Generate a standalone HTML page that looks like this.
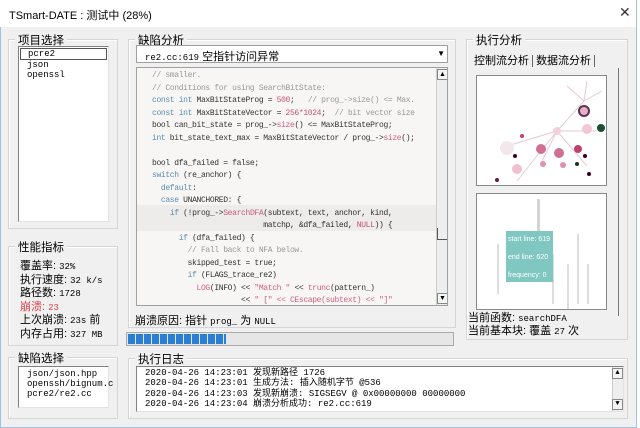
<!DOCTYPE html>
<html><head><meta charset="utf-8"><style>
*{margin:0;padding:0;box-sizing:border-box}
body{width:640px;height:428px;overflow:hidden;background:#fff;font-family:"Liberation Sans","Noto Sans CJK SC",sans-serif;font-size:11px;color:#000;position:relative}
.win{position:absolute;left:0;top:0;width:637px;height:428px;border:1px solid #9cc3e6;border-top:none;background:#f0f0f0}
.title{position:absolute;left:0;top:0;width:636px;height:27px;background:#fff;font-size:11px;padding:7px 0 0 9px}
.x{position:absolute;left:619px;top:4px;font-size:14px;color:#333}
.grp{position:absolute;border:1px solid #d5d5d5;box-shadow:inset 1px 1px 0 #fff}
.gl{position:absolute;top:-8px;left:6px;background:#f0f0f0;padding:0 3px;font-size:11.5px}
.box{position:absolute;background:#fff;border:1px solid #828282;border-right-color:#e3e3e3;border-bottom-color:#e3e3e3}
.mono{font-family:"Liberation Mono","Noto Sans CJK SC",monospace;font-size:9px;line-height:10px}
.code{position:absolute;left:136px;top:67px;width:312px;height:239px;background:#f7f6f5;border:1px solid #a0a0a0;overflow:hidden}
.code pre{font-family:"Liberation Mono",monospace;font-size:8px;letter-spacing:-0.35px;line-height:12.5px;color:#333;position:absolute;left:15px;top:2px;white-space:pre}
.cm{color:#999}.kw{color:#5a8fb0}.nu{color:#c7557a}.fn{color:#d06080}
.sb{position:absolute;background:#eee;border-left:1px solid #ccc}
.arr{position:absolute;width:11px;height:11px;background:#f4f4f4;border:1px solid #888;font-size:7px;text-align:center;line-height:9px}
</style></head><body>
<div class="win"></div>
<div class="title">TSmart-DATE : 测试中 (28%)</div>
<div class="x">✕</div>

<div class="grp" style="left:8px;top:39px;width:110px;height:190px"><div class="gl">项目选择</div></div>
<div class="box mono" style="left:18px;top:46px;width:91px;height:176px;padding:1px 0 0 0">
<div style="border:1px solid #555;margin:0 1px;padding-left:7px">pcre2</div>
<div style="padding-left:8px">json</div><div style="padding-left:8px">openssl</div></div>

<div class="grp" style="left:8px;top:246px;width:110px;height:100px"><div class="gl">性能指标</div></div>
<div style="position:absolute;left:20px;top:260px;line-height:13.5px;font-size:11px">
<div>覆盖率: <span class="mono">32%</span></div>
<div>执行速度: <span class="mono">32 k/s</span></div>
<div>路径数: <span class="mono">1728</span></div>
<div style="color:#e0404a">崩溃: <span class="mono">23</span></div>
<div>上次崩溃: <span class="mono">23s</span> 前</div>
<div>内存占用: <span class="mono">327 MB</span></div></div>

<div class="grp" style="left:8px;top:357px;width:110px;height:62px"><div class="gl">缺陷选择</div></div>
<div class="box mono" style="left:18px;top:366px;width:91px;height:42px;padding:2px 0 0 8px">json/json.hpp<br>openssh/bignum.c<br>pcre2/re2.cc</div>

<div class="grp" style="left:128px;top:39px;width:328px;height:289px"><div class="gl">缺陷分析</div></div>
<div class="box" style="left:136px;top:45px;width:312px;height:18px;border:1px solid #a0a0a0;padding:2px 0 0 8px;font-size:11px"><span class="mono">re2.cc:619</span> 空指针访问异常
<div style="position:absolute;right:2px;top:3px;font-size:8px">▼</div></div>
<div class="code"><pre><span class="cm">// smaller.
// Conditions for using SearchBitState:</span>
<span class="kw">const int</span> MaxBitStateProg = <span class="nu">500</span>;   <span class="cm">// prog_->size() <= Max.</span>
<span class="kw">const int</span> MaxBitStateVector = <span class="nu">256*1024</span>;  <span class="cm">// bit vector size</span>
bool can_bit_state = prog_-><span class="fn">size</span>() <= MaxBitStateProg;
<span class="kw">int</span> bit_state_text_max = MaxBitStateVector / prog_-><span class="fn">size</span>();

bool dfa_failed = false;
<span class="kw">switch</span> (re_anchor) {
  <span class="kw">default</span>:
  <span class="kw">case</span> UNANCHORED: {
    <span class="kw">if</span> (!prog_-><span class="fn">SearchDFA</span>(subtext, text, anchor, kind,
                         matchp, &amp;dfa_failed, <span class="nu">NULL</span>)) {
      <span class="kw">if</span> (dfa_failed) {
        <span class="cm">// Fall back to NFA below.</span>
        skipped_test = true;
        <span class="kw">if</span> (FLAGS_trace_re2)
          <span class="fn">LOG</span>(INFO) << <span class="fn">"Match "</span> << <span class="fn">trunc</span>(pattern_)
                    << <span class="fn">" [" << CEscape(subtext) << "]"</span></pre>
<div style="position:absolute;left:0;top:137px;width:300px;height:26px;background:rgba(0,0,0,0.04)"></div>
<div class="sb" style="left:299px;top:0;width:12px;height:237px"></div>
<div class="arr" style="left:300px;top:1px">▲</div>
<div class="arr" style="left:300px;top:225px">▼</div>
<div style="position:absolute;left:300px;top:160px;width:11px;height:12px;border-bottom:1px solid #555;border-left:1px solid #555"></div>
</div>
<div style="position:absolute;left:135px;top:312px;font-size:11px">崩溃原因: 指针 <span class="mono">prog_</span> 为 <span class="mono">NULL</span></div>
<div style="position:absolute;left:126px;top:332px;width:328px;height:14px;border:1px solid #aaa;background:#e6e6e6;padding:1px">
<div style="width:98px;height:10px;background:repeating-linear-gradient(90deg,#2a7fd4 0 7px,#e6e6e6 7px 8px)"></div></div>

<div class="grp" style="left:128px;top:358px;width:500px;height:61px"><div class="gl">执行日志</div></div>
<div class="box mono" style="left:136px;top:366px;width:488px;height:46px;padding:1px 0 0 8px;line-height:10.3px">2020-04-26 14:23:01 发现新路径 1726<br>2020-04-26 14:23:01 生成方法: 插入随机字节 @536<br>2020-04-26 14:23:03 发现新崩溃: SIGSEGV @ 0x00000000 00000000<br>2020-04-26 14:23:04 崩溃分析成功: re2.cc:619
<div class="sb" style="left:475px;top:0;width:11px;height:44px;position:absolute"></div>
<div class="arr" style="left:475px;top:1px">▲</div><div class="arr" style="left:475px;top:32px">▼</div></div>

<div class="grp" style="left:466px;top:39px;width:162px;height:301px"><div class="gl">执行分析</div></div>
<div style="position:absolute;left:474px;top:52px;font-size:11px">控制流分析 <span style="border-left:1px solid #666;border-right:1px solid #666;padding:0 3px">数据流分析</span></div>
<div style="position:absolute;left:472px;top:68px;width:147px;height:248px;border-right:1px solid #777"></div>
<div style="position:absolute;left:476px;top:75px;width:131px;height:111px;background:#fff;border:1px solid #888">
<svg width="129" height="109" viewBox="0 0 129 109">
<g stroke="#e8c8d4" stroke-width="1" fill="none"><path d="M80 55 L107 25 L110 5 M80 55 L30 70 M80 55 L120 55 M80 55 L65 85 M80 55 L110 90 M80 55 L40 105 M107 25 L90 10 M107 25 L125 15"/></g>
<circle cx="107" cy="35" r="5" fill="#e8b0c8" stroke="#603050" stroke-width="2"/>
<circle cx="80" cy="55" r="4" fill="#f3d0dc"/><circle cx="110" cy="53" r="5" fill="#f3c8d6"/><circle cx="124" cy="52" r="4" fill="#1e5030"/>
<circle cx="64" cy="73" r="5" fill="#d07090"/><circle cx="82" cy="77" r="5" fill="#d07090"/><circle cx="101" cy="73" r="4" fill="#c04070"/>
<circle cx="40" cy="93" r="5" fill="#f0c0d0"/><circle cx="30" cy="72" r="7" fill="#f2e8ec"/><circle cx="86" cy="89" r="3" fill="#e090b0"/><circle cx="66" cy="88" r="3" fill="#e090b0"/>
<circle cx="108" cy="80" r="2" fill="#400020"/><circle cx="100" cy="88" r="2" fill="#203020"/><circle cx="112" cy="98" r="2" fill="#400020"/><circle cx="20" cy="104" r="2" fill="#602040"/><circle cx="38" cy="80" r="2" fill="#400020"/><circle cx="45" cy="60" r="2" fill="#c04070"/>
</svg></div>
<div style="position:absolute;left:476px;top:193px;width:131px;height:117px;background:#fff;border:1px solid #888;overflow:hidden">
<svg width="129" height="115" style="position:absolute;left:0;top:0"><g fill="#aaa"><rect x="60" y="5" width="3" height="40" opacity=".5"/><rect x="20" y="50" width="2" height="50" opacity=".4"/><rect x="100" y="40" width="2" height="70" opacity=".4"/><rect x="110" y="70" width="2" height="40" opacity=".4"/><rect x="75" y="60" width="2" height="50" opacity=".4"/><rect x="90" y="70" width="2" height="45" opacity=".4"/></g></svg>
<div style="position:absolute;left:29px;top:37px;width:47px;height:51px;background:#7fc7c0;color:#fff;font-size:7px;line-height:18px;padding-left:2px">start line: 619<br>end line: 620<br>frequency: 0</div></div>
<div style="position:absolute;left:468px;top:312px;font-size:11px;line-height:13px">当前函数: <span class="mono">searchDFA</span><br>当前基本块: 覆盖 <span class="mono">27</span> 次</div>
</body></html>
